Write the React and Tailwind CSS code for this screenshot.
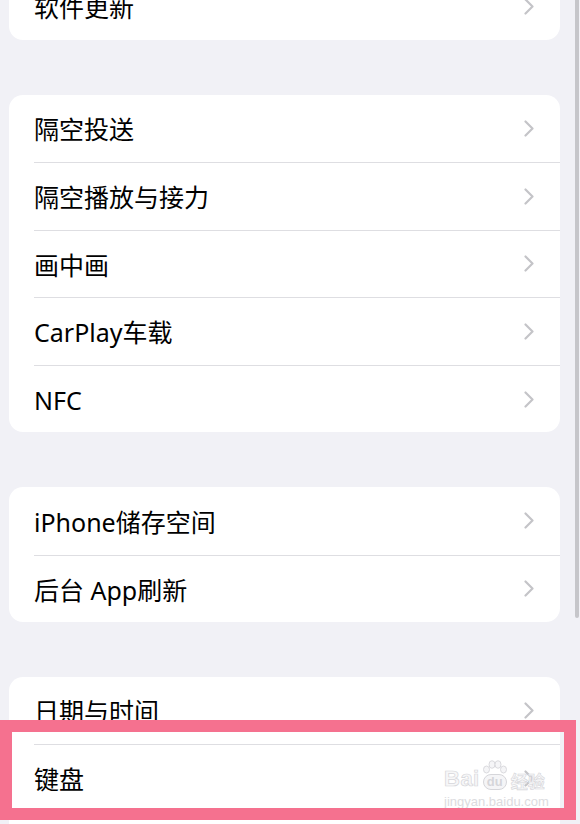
import React from 'react';

const groups = [
    ['软件更新'],
    ['隔空投送', '隔空播放与接力', '画中画', 'CarPlay车载', 'NFC'],
    ['iPhone储存空间', '后台 App刷新'],
    ['日期与时间', '键盘'],
];

const Chevron = () => (
    <svg width="10" height="17" viewBox="0 0 10 17" fill="none" className="shrink-0">
        <path d="M1.5 1.5 L8.5 8.5 L1.5 15.5" stroke="#c4c4c8" strokeWidth="2.2" strokeLinecap="round" strokeLinejoin="round" />
    </svg>
);

const Row = ({ label, first }) => (
    <div className="pl-[25px]">
        <div className={`h-[67.6px] flex items-center justify-between pr-[26px] ${first ? '' : 'border-t border-[#dedee2]'}`}>
            <span className="text-[25px] text-black pt-[3px]">{label}</span>
            <Chevron />
        </div>
    </div>
);

const App = () => {
    return (
        <div
            className="relative w-[580px] h-[824px] overflow-hidden bg-[#f1f1f6]"
            style={{ fontFamily: '"Noto Sans", "Noto Sans CJK SC", sans-serif' }}
        >
            <div className="flex flex-col gap-[54.5px] pl-[9px] pr-[20px] -mt-[27.6px]">
                {groups.map((rows, gi) => (
                    <div key={gi} className="bg-white rounded-[14px] overflow-hidden">
                        {rows.map((label, i) => (
                            <Row key={label} label={label} first={i === 0} />
                        ))}
                        {gi === groups.length - 1 && <div className="h-[60px] border-t border-[#dedee2] ml-[25px]" />}
                    </div>
                ))}
            </div>

            {/* scroll indicator */}
            <div className="absolute top-0 left-[575px] w-[4px] h-[618px] rounded-b-full bg-[#c6c6ca]" />

            {/* watermark */}
            <div className="absolute left-[444px] top-[760px] flex flex-col items-start select-none">
                <div className="flex items-end leading-none">
                    <span className="text-[22px] font-bold tracking-[0.5px]" style={{ fontFamily: '"Liberation Sans", sans-serif', WebkitTextStroke: '0.7px #d6d6da', color: '#f7f7f8' }}>Bai</span>
                    <span className="flex flex-col items-center ml-[2px]">
                        <svg width="26" height="14" viewBox="0 0 26 14" fill="#f5f5f7" stroke="#d6d6da" strokeWidth="0.9">
                            <ellipse cx="4.5" cy="9.5" rx="3" ry="3.5" />
                            <ellipse cx="10" cy="4.5" rx="3" ry="3.8" />
                            <ellipse cx="16" cy="4.5" rx="3" ry="3.8" />
                            <ellipse cx="21.5" cy="9.5" rx="3" ry="3.5" />
                        </svg>
                        <span className="px-[3px] pb-[1px] rounded-full border border-[#d6d6da] bg-[#f5f5f7] text-[13px] font-bold text-[#d6d6da]" style={{ fontFamily: '"Liberation Sans", sans-serif' }}>du</span>
                    </span>
                    <span className="text-[17px] font-bold ml-[3px]" style={{ WebkitTextStroke: '0.6px #d6d6da', color: '#f7f7f8' }}>经验</span>
                </div>
                <span className="text-[13px] leading-none mt-[5px] text-[#dcdce0]" style={{ fontFamily: '"Liberation Sans", sans-serif' }}>jingyan.baidu.com</span>
            </div>

            {/* highlight frame */}
            <div className="absolute left-0 top-[720px] w-[576px] h-[100px] border-[12px] border-[#f5718f]" />
        </div>
    );
};

export default App;
